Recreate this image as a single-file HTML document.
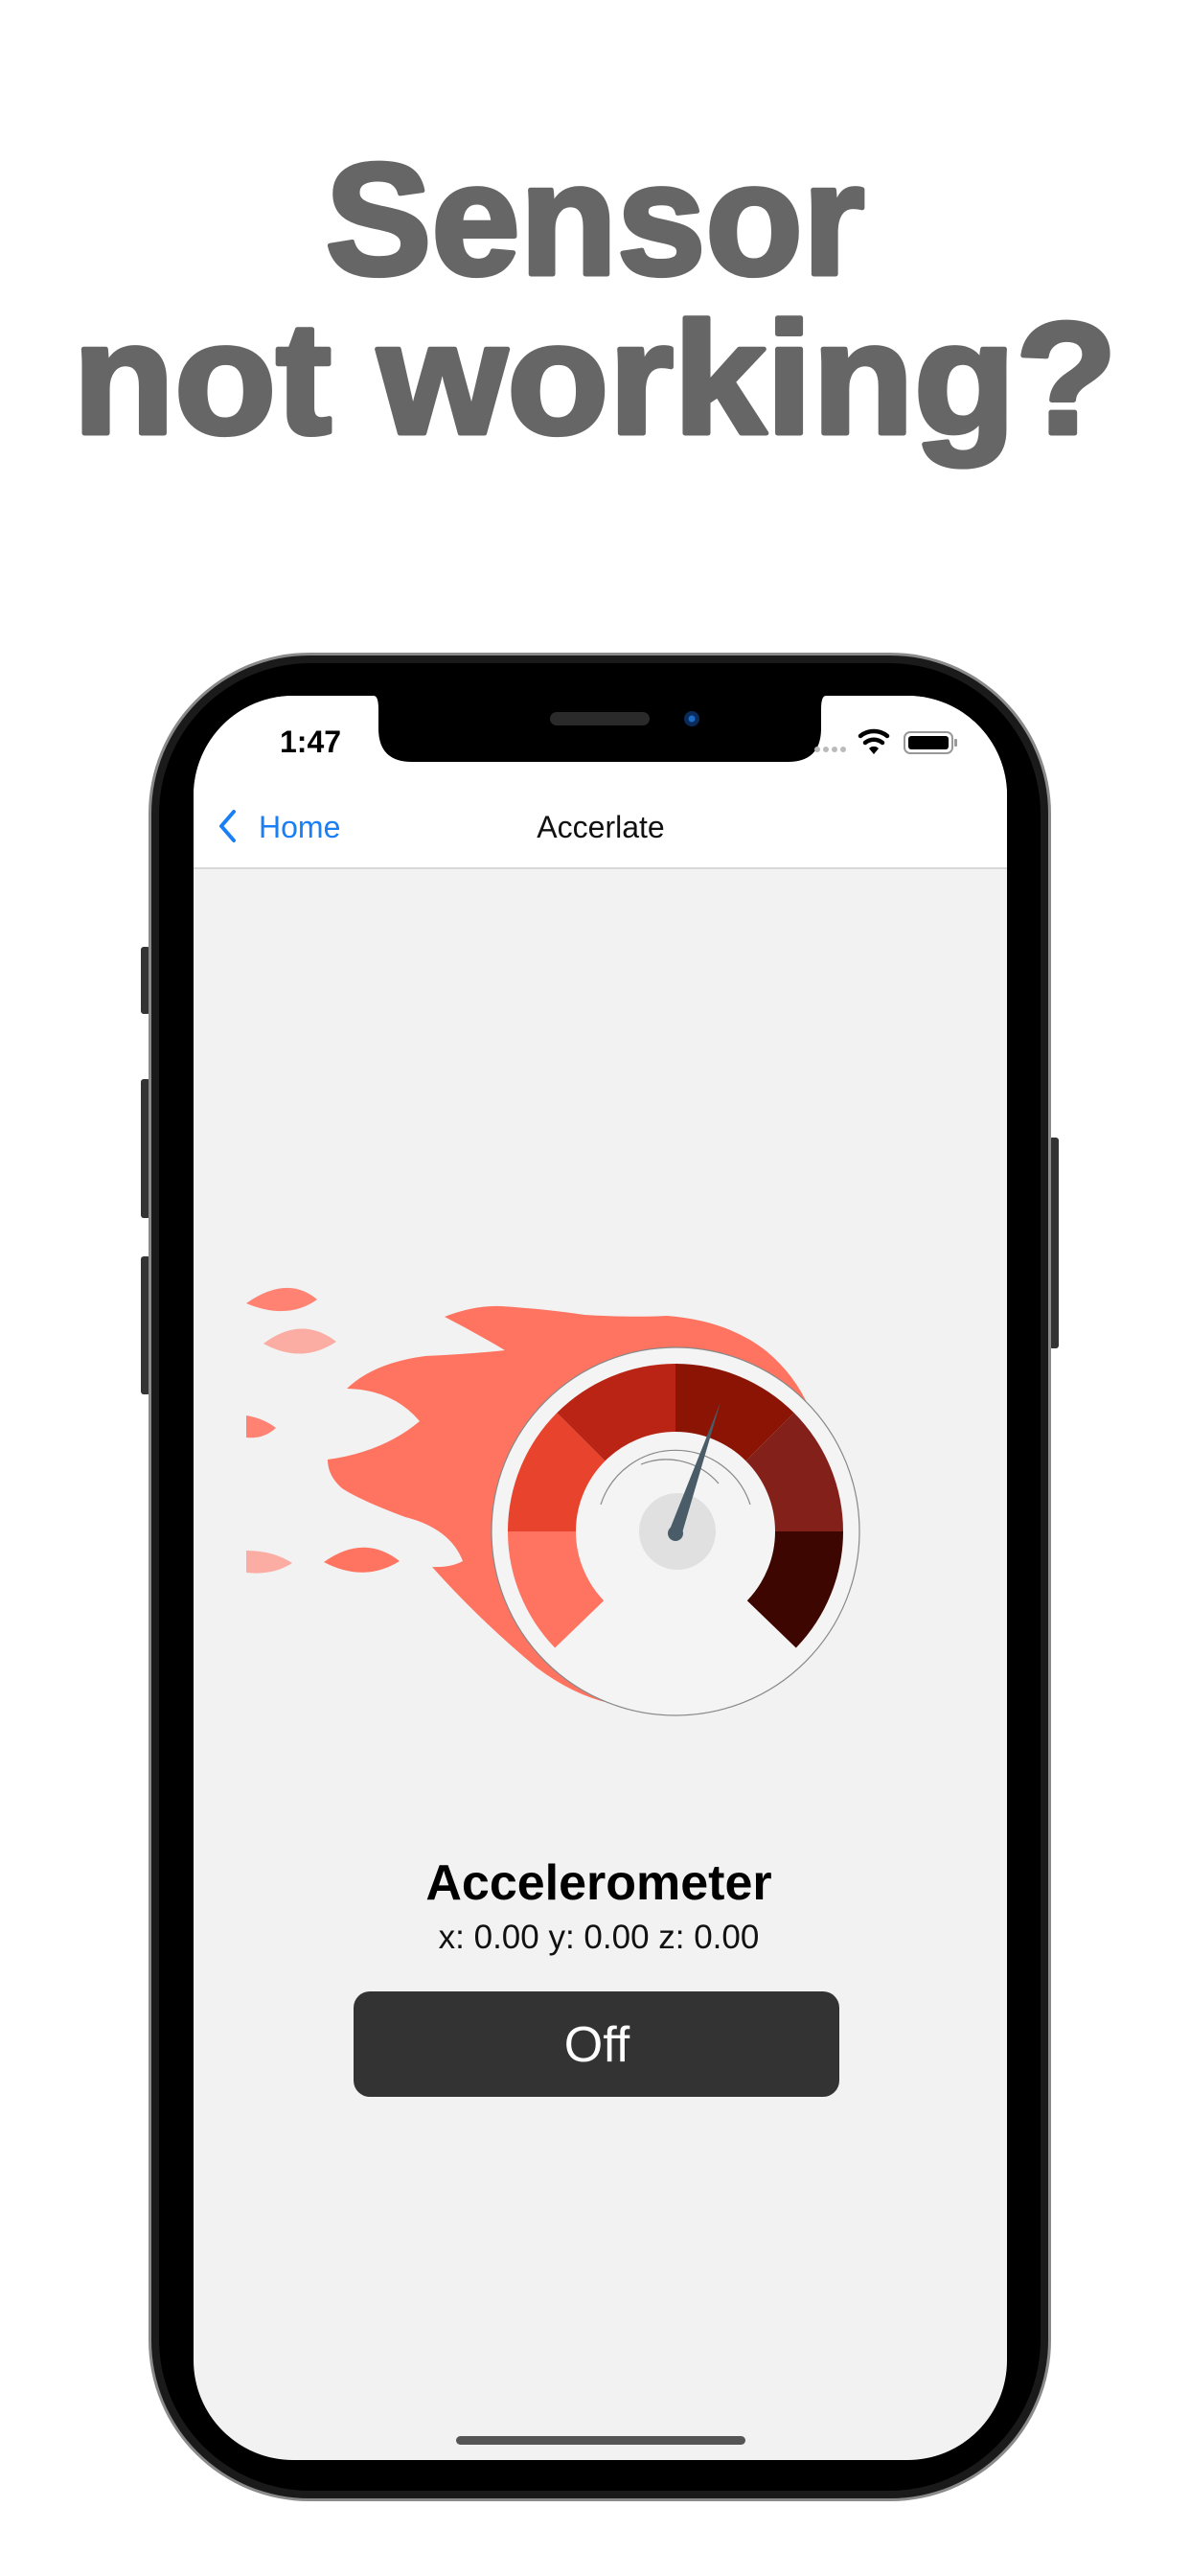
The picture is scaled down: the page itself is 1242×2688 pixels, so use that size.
<!DOCTYPE html>
<html><head><meta charset="utf-8">
<style>
html,body{margin:0;padding:0;background:#fff;}
body{width:1242px;height:2688px;overflow:hidden;position:relative;font-family:"Liberation Sans",sans-serif;}
</style></head>
<body>
<svg width="1242" height="2688" viewBox="0 0 1242 2688" xmlns="http://www.w3.org/2000/svg" style="position:absolute;left:0;top:0">
<defs><clipPath id="scr"><rect x="202" y="726" width="849" height="1841" rx="104"/></clipPath></defs>
<text x="621" y="286" text-anchor="middle" font-family="Liberation Sans" font-weight="bold" font-size="166" fill="#666" stroke="#666" stroke-width="5" stroke-linejoin="round">Sensor</text>
<text x="621" y="452" text-anchor="middle" font-family="Liberation Sans" font-weight="bold" font-size="166" fill="#666" stroke="#666" stroke-width="5" stroke-linejoin="round" textLength="1090" lengthAdjust="spacingAndGlyphs">not working?</text>

<!-- side buttons -->
<rect x="147" y="988" width="10" height="70" rx="3" fill="#333"/>
<rect x="147" y="1126" width="10" height="145" rx="3" fill="#333"/>
<rect x="147" y="1311" width="10" height="144" rx="3" fill="#333"/>
<rect x="1095" y="1187" width="10" height="220" rx="3" fill="#333"/>
<!-- phone body -->
<rect x="155" y="681" width="942" height="1929" rx="168" fill="#8a8a8a"/>
<rect x="158" y="684" width="936" height="1923" rx="165" fill="#1a1a1a"/>
<rect x="166" y="692" width="920" height="1907" rx="158" fill="#000"/>
<!-- screen -->
<g clip-path="url(#scr)">
<rect x="202" y="726" width="849" height="1841" fill="#f2f2f2"/>
<rect x="202" y="726" width="849" height="180" fill="#fff"/>
<rect x="202" y="905" width="849" height="2" fill="#d8d8d8"/>
</g>
<!-- notch -->
<path d="M390 726 H862 Q857 726 857 740 V760 Q857 795 822 795 H430 Q395 795 395 760 V740 Q395 726 390 726 Z" fill="#000"/>
<rect x="574" y="743" width="104" height="14" rx="7" fill="#2a2a2a"/>
<circle cx="722" cy="750" r="8" fill="#0a2a5a"/><circle cx="722" cy="750" r="3.5" fill="#1d6bc4"/>
<!-- status -->
<text x="292" y="785" font-family="Liberation Sans" font-weight="bold" font-size="32" fill="#000">1:47</text>
<g fill="#bbb"><circle cx="853" cy="782" r="3"/><circle cx="862" cy="782" r="3"/><circle cx="871" cy="782" r="3"/><circle cx="880" cy="782" r="3"/></g>
<g fill="none" stroke="#000" stroke-width="4.5" stroke-linecap="round">
<path d="M898 768 A22 22 0 0 1 926 768"/><path d="M903 775 A14 14 0 0 1 921 775"/></g>
<path d="M907 781 L912 787 L917 781 A7 7 0 0 0 907 781 Z" fill="#000"/>
<rect x="944" y="764" width="50" height="22" rx="6" fill="none" stroke="#999" stroke-width="2"/>
<rect x="948" y="768" width="42" height="14" rx="3" fill="#000"/>
<rect x="996" y="771" width="3" height="8" rx="1" fill="#999"/>
<!-- nav -->
<path d="M244 847 L231 862 L244 877" fill="none" stroke="#1a7ff5" stroke-width="4" stroke-linecap="round" stroke-linejoin="round"/>
<text x="270" y="874" font-family="Liberation Sans" font-size="32" fill="#1a7ff5">Home</text>
<text x="627" y="874" text-anchor="middle" font-family="Liberation Sans" font-size="32" fill="#111">Accerlate</text>

<!-- droplets -->
<path d="M257 1360 Q300 1330 331 1356 Q300 1378 257 1360 Z" fill="#ff8273"/>
<path d="M275 1402 Q315 1372 351 1400 Q315 1424 275 1402 Z" fill="#fbada4"/>
<path d="M257 1477 Q275 1480 288 1490 Q275 1502 257 1500 Z" fill="#ff8273"/>
<path d="M257 1618 Q285 1618 305 1631 Q285 1644 257 1641 Z" fill="#fbada4"/>
<path d="M338 1630 Q380 1600 417 1629 Q380 1652 338 1630 Z" fill="#ff7361"/>
<!-- flame -->
<path d="M464 1374 Q495 1362 523 1363 Q570 1366 610 1372 Q660 1375 696 1373 Q760 1378 800 1410 Q830 1435 845 1470 L760 1780 Q700 1790 640 1778 Q600 1770 560 1740 Q500 1690 451 1635 Q470 1636 483 1629 Q470 1595 423 1583 Q375 1565 357 1553 Q342 1540 342 1523 Q400 1515 438 1483 Q410 1450 362 1449 Q390 1422 444 1415 Q490 1413 527 1409 Q495 1390 464 1374 Z" fill="#ff7361"/>
<!-- gauge -->
<circle cx="705" cy="1598" r="192" fill="#f4f4f4" stroke="#888" stroke-width="1.2"/>
<g transform="translate(705 1598)">
<path d="M-125.8 121.5 A175 175 0 0 1 -175 0 L-104 0 A104 104 0 0 0 -74.8 72.2 Z" fill="#ff7361"/>
<path d="M-175 0 A175 175 0 0 1 -123.7 -123.7 L-73.5 -73.5 A104 104 0 0 0 -104 0 Z" fill="#e8432c"/>
<path d="M-123.7 -123.7 A175 175 0 0 1 0 -175 L0 -104 A104 104 0 0 0 -73.5 -73.5 Z" fill="#b92414"/>
<path d="M0 -175 A175 175 0 0 1 123.7 -123.7 L73.5 -73.5 A104 104 0 0 0 0 -104 Z" fill="#8c1404"/>
<path d="M123.7 -123.7 A175 175 0 0 1 175 0 L104 0 A104 104 0 0 0 73.5 -73.5 Z" fill="#83201a"/>
<path d="M175 0 A175 175 0 0 1 125.8 121.5 L74.8 72.2 A104 104 0 0 0 104 0 Z" fill="#3d0600"/>
<path d="M-78 -28 A82 82 0 0 1 78 -28" fill="none" stroke="#888" stroke-width="1.2"/>
<path d="M-36 -70 A72 72 0 0 1 45 -50" fill="none" stroke="#888" stroke-width="1.2"/>
<circle cx="2" cy="0" r="40" fill="#e0e0e0"/>
<path d="M-6 -2 L47 -135 L6 5 A8 8 0 0 1 -6 -2 Z" fill="#4a5c68"/>
<circle cx="0" cy="2" r="8" fill="#4a5c68"/>
</g>

<!-- text -->
<text x="625" y="1982" text-anchor="middle" font-family="Liberation Sans" font-weight="bold" font-size="52" fill="#000">Accelerometer</text>
<text x="625" y="2033" text-anchor="middle" font-family="Liberation Sans" font-size="35" fill="#111">x: 0.00 y: 0.00 z: 0.00</text>
<rect x="369" y="2078" width="507" height="110" rx="17" fill="#333"/>
<text x="623" y="2151" text-anchor="middle" font-family="Liberation Sans" font-size="52" fill="#fff">Off</text>
<rect x="476" y="2542" width="302" height="9" rx="4.5" fill="#555"/>
</svg>
</body></html>
